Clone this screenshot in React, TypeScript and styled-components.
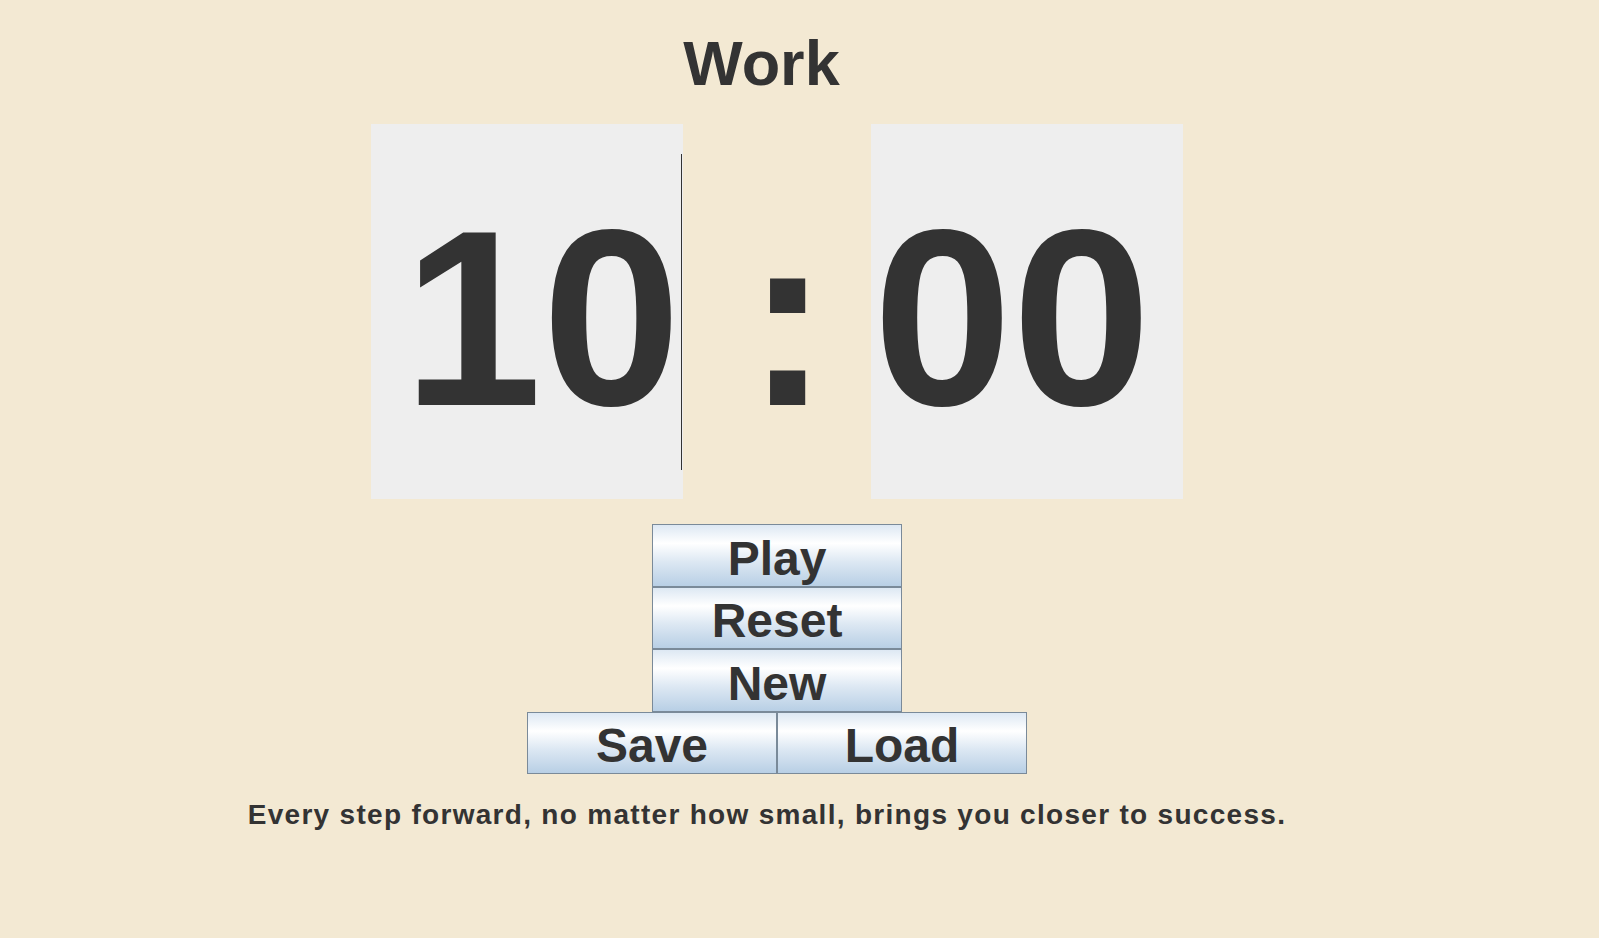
import React from "react";
import styled, { createGlobalStyle } from "styled-components";

const GlobalStyle = createGlobalStyle`
  html, body {
    margin: 0;
    padding: 0;
    background: #f3e9d3;
  }
  body {
    font-family: "Liberation Sans", Arial, sans-serif;
    color: #333333;
  }
`;

const Page = styled.div`
  width: 1554px;
  min-height: 938px;
  display: flex;
  flex-direction: column;
  align-items: center;
`;

const Title = styled.h1`
  margin: 32px 0 0 0;
  padding-right: 31px;
  font-size: 63px;
  line-height: 63px;
  font-weight: 700;
  color: #333333;
`;

const ClockRow = styled.div`
  margin-top: 29px;
  display: flex;
  flex-direction: row;
  align-items: stretch;
`;

const DigitField = styled.div<{ $align: "left" | "right" }>`
  width: 312px;
  height: 375px;
  box-sizing: border-box;
  background: #eeeeee;
  display: flex;
  align-items: center;
  justify-content: ${(p) => (p.$align === "right" ? "flex-end" : "flex-start")};
  padding: ${(p) => (p.$align === "right" ? "0 1px 0 0" : "0 0 0 2px")};
`;

const Digits = styled.span`
  font-size: 250px;
  line-height: 250px;
  font-weight: 700;
  margin-top: 14px;
  color: #333333;
  white-space: pre;
`;

const Caret = styled.span`
  display: block;
  width: 1px;
  height: 316px;
  background: #333333;
`;

const Separator = styled.div`
  width: 188px;
  box-sizing: border-box;
  padding-left: 63px;
  display: flex;
  align-items: center;
`;

const ButtonStack = styled.div`
  margin-top: 25px;
  display: flex;
  flex-direction: column;
  align-items: center;
`;

const ButtonRow = styled.div`
  display: flex;
  flex-direction: row;
`;

const Button = styled.button<{ $h?: number }>`
  width: 250px;
  height: ${(p) => p.$h ?? 62}px;
  box-sizing: border-box;
  margin: 0;
  padding: 6px 0 0 0;
  border: 1px solid #7a8a99;
  background: linear-gradient(
    to bottom,
    #dde8f3 0%,
    #ffffff 30%,
    #dde8f3 60%,
    #b8cfe5 100%
  );
  font-family: "Liberation Sans", Arial, sans-serif;
  font-size: 48px;
  font-weight: 700;
  line-height: 48px;
  color: #333333;
  display: flex;
  align-items: center;
  justify-content: center;
  cursor: pointer;
`;

const Quote = styled.p`
  margin: 27px 0 0 0;
  padding-right: 20px;
  font-size: 28px;
  line-height: 28px;
  font-weight: 700;
  letter-spacing: 1.3px;
  color: #333333;
  white-space: nowrap;
`;

export default function App() {
  return (
    <>
      <GlobalStyle />
      <Page>
        <Title>Work</Title>
        <ClockRow>
          <DigitField $align="right">
            <Digits>10</Digits>
            <Caret />
          </DigitField>
          <Separator>
            <Digits>:</Digits>
          </Separator>
          <DigitField $align="left">
            <Digits>00</Digits>
          </DigitField>
        </ClockRow>
        <ButtonStack>
          <Button $h={63}>Play</Button>
          <Button $h={62}>Reset</Button>
          <Button $h={63}>New</Button>
          <ButtonRow>
            <Button $h={62}>Save</Button>
            <Button $h={62}>Load</Button>
          </ButtonRow>
        </ButtonStack>
        <Quote>Every step forward, no matter how small, brings you closer to success.</Quote>
      </Page>
    </>
  );
}
